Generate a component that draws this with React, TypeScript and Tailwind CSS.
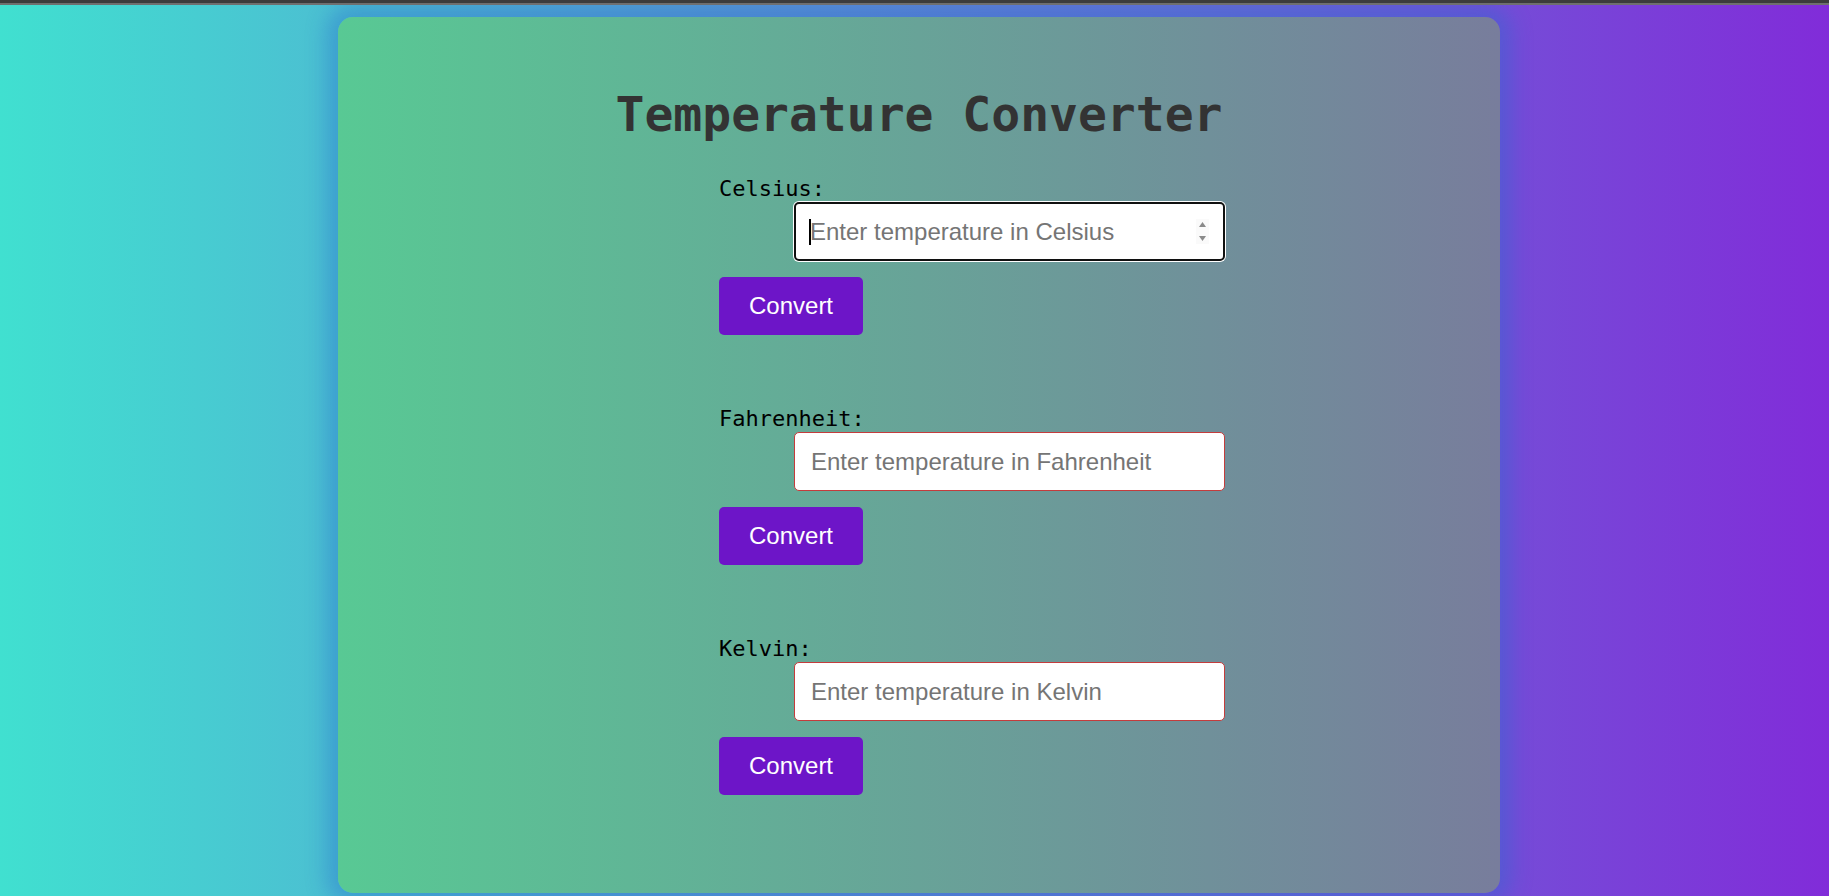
import React from "react";

function Section({
  label,
  placeholder,
  focused,
  first,
}: {
  label: string;
  placeholder: string;
  focused?: boolean;
  first?: boolean;
}) {
  return (
    <div className={first ? "mt-[34px]" : "mt-[71px]"}>
      <label className="block font-['DejaVu_Sans_Mono',monospace] text-[22px] leading-[25px] text-black">
        {label}
      </label>
      {focused ? (
        <div className="relative mt-[1px] ml-[75px] h-[59px] w-[431px] rounded-[5px] border-2 border-[#101010] bg-white shadow-[0_0_0_1px_#ffffff]">
          <input
            type="text"
            placeholder={placeholder}
            className="h-full w-full rounded-[5px] bg-transparent pl-[14px] font-['Liberation_Sans',Arial,sans-serif] text-[24px] text-black outline-none placeholder:text-[#757575]"
          />
          <span className="absolute left-[13px] top-[15px] h-[26px] w-[2px] bg-black" />
          <span className="absolute right-[14px] top-[15px] flex h-[25px] w-[13px] flex-col items-center justify-center gap-[9px] bg-[#fafafa]">
            <svg width="7" height="5" viewBox="0 0 7 5">
              <path d="M3.5 0 L7 5 L0 5 Z" fill="#8a8a8a" />
            </svg>
            <svg width="7" height="5" viewBox="0 0 7 5">
              <path d="M0 0 L7 0 L3.5 5 Z" fill="#8a8a8a" />
            </svg>
          </span>
        </div>
      ) : (
        <input
          type="text"
          placeholder={placeholder}
          className="mt-[1px] ml-[75px] block h-[59px] w-[431px] rounded-[5px] border border-[#c43c3c] bg-white pl-[16px] font-['Liberation_Sans',Arial,sans-serif] text-[24px] text-black outline-none placeholder:text-[#757575]"
        />
      )}
      <button className="mt-[16px] flex h-[58px] items-center justify-center rounded-[5px] bg-[#6d15c8] px-[30px] font-['Liberation_Sans',Arial,sans-serif] text-[24px] text-white">
        Convert
      </button>
    </div>
  );
}

export default function App() {
  return (
    <div className="min-h-screen bg-[linear-gradient(to_right,#40e0d0,#812cd9)] font-['Liberation_Sans',Arial,sans-serif]">
      <div className="relative z-10">
        <div className="h-[3px] bg-[#3c3c3c]" />
        <div className="h-[2px] bg-[#6f6f6f]" />
      </div>
      <div className="flex justify-center pb-[24px] pl-[9px] pt-[12px]">
        <div className="h-[876px] w-[1162px] rounded-[15px] bg-[linear-gradient(to_right,#58c994,#787d9c)] pt-[69px] shadow-[0_0_20px_12px_rgba(37,108,204,0.38)]">
          <h1 className="text-center font-['DejaVu_Sans_Mono',monospace] text-[48px] font-bold leading-[56px] text-[#333333]">
            Temperature Converter
          </h1>
          <div className="pl-[381px]">
            <Section label="Celsius:" placeholder="Enter temperature in Celsius" focused first />
            <Section label="Fahrenheit:" placeholder="Enter temperature in Fahrenheit" />
            <Section label="Kelvin:" placeholder="Enter temperature in Kelvin" />
          </div>
        </div>
      </div>
    </div>
  );
}
